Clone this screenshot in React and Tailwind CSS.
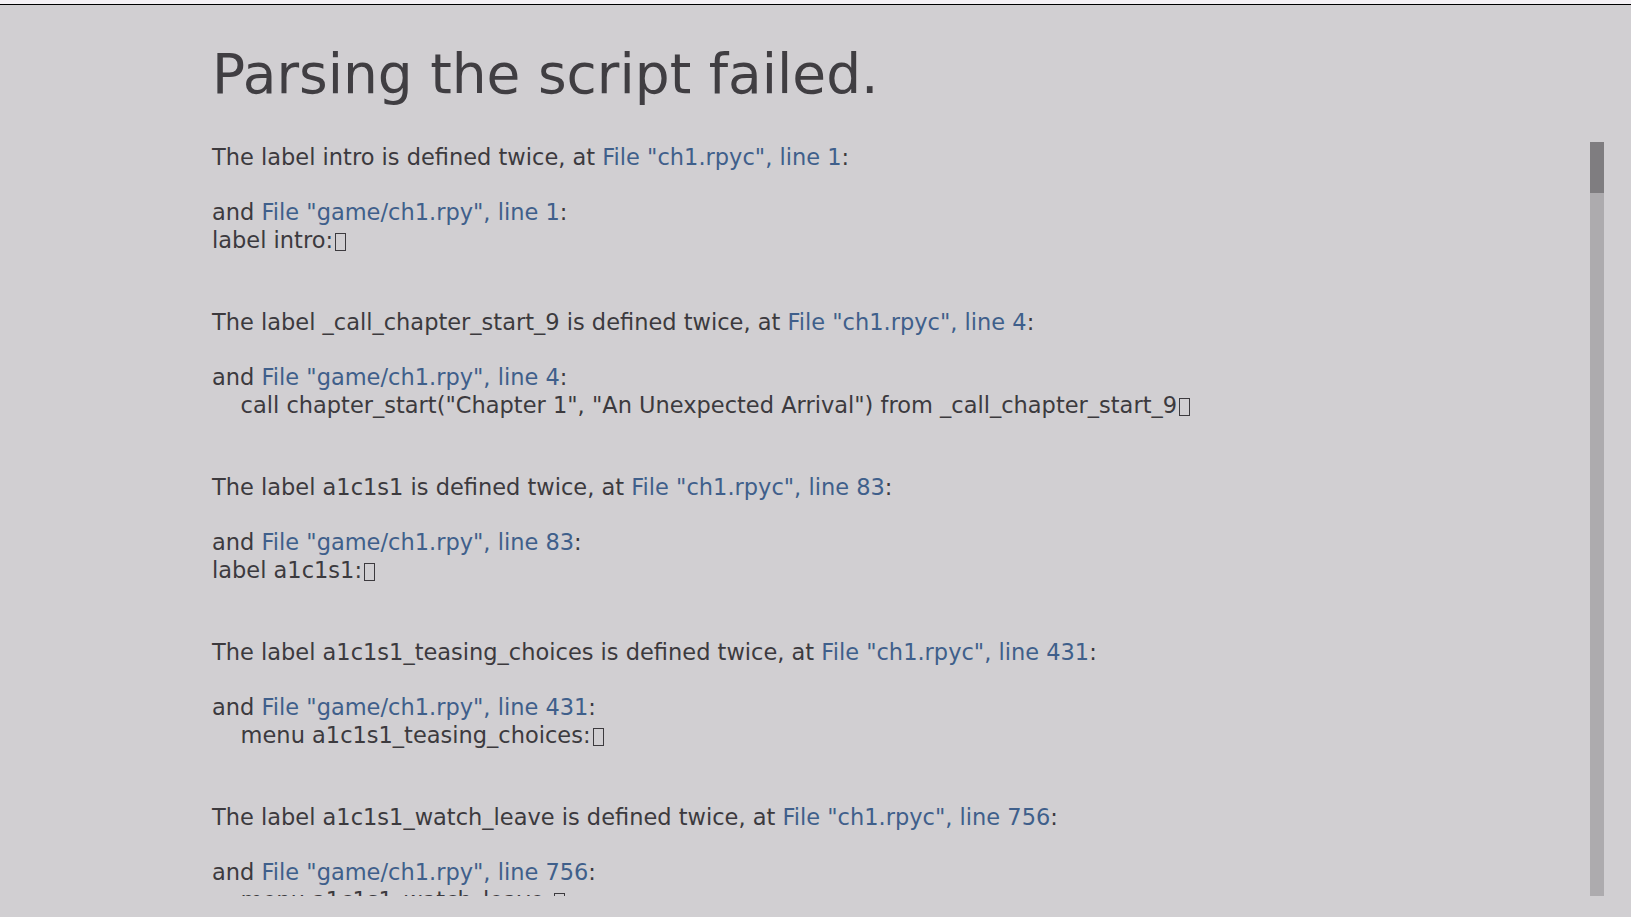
import React from "react";

const entries = [
  { label: "intro", line: "1", code: "label intro:" },
  {
    label: "_call_chapter_start_9",
    line: "4",
    code: '    call chapter_start("Chapter 1", "An Unexpected Arrival") from _call_chapter_start_9',
  },
  { label: "a1c1s1", line: "83", code: "label a1c1s1:" },
  { label: "a1c1s1_teasing_choices", line: "431", code: "    menu a1c1s1_teasing_choices:" },
  { label: "a1c1s1_watch_leave", line: "756", code: "    menu a1c1s1_watch_leave:" },
  { label: "a1c1s1_follow", line: "812", code: "label a1c1s1_follow:" },
];

function Tofu() {
  return (
    <span className="inline-block w-[11px] h-[18px] ml-[2px] border border-[#3c3a3e] align-[-3px]" />
  );
}

function Link({ children }) {
  return <span className="text-[#3f5f8b]">{children}</span>;
}

function Entry({ e }) {
  return (
    <div>
      <div>
        The label {e.label} is defined twice, at <Link>File "ch1.rpyc", line {e.line}</Link>:
      </div>
      <div>&nbsp;</div>
      <div>
        and <Link>File "game/ch1.rpy", line {e.line}</Link>:
      </div>
      <div className="whitespace-pre">
        {e.code}
        <Tofu />
      </div>
      <div>&nbsp;</div>
      <div>&nbsp;</div>
    </div>
  );
}

export default function App() {
  return (
    <div
      className="w-[1631px] h-[917px] bg-[#d1cfd2] flex flex-col overflow-hidden text-[#3c3a3e]"
      style={{ fontFamily: '"DejaVu Sans", sans-serif' }}
    >
      <div className="h-[4px] bg-[#f4f1f5]" />
      <div className="h-[1px] bg-black" />
      <div className="pl-[212px] pt-[42px] h-[137px]">
        <h1 className="text-[55px] leading-[55px] text-[#403e42]">Parsing the script failed.</h1>
      </div>
      <div className="flex h-[754px]">
        <div className="flex-1 pl-[212px] pt-[2px] overflow-hidden text-[22.5px] leading-[27.5px]">
          {entries.map((e) => (
            <Entry key={e.label} e={e} />
          ))}
        </div>
        <div className="w-[14px] mr-[27px] bg-[#adabae] flex flex-col">
          <div className="h-[51px] bg-[#7f7d80]" />
        </div>
      </div>
    </div>
  );
}
